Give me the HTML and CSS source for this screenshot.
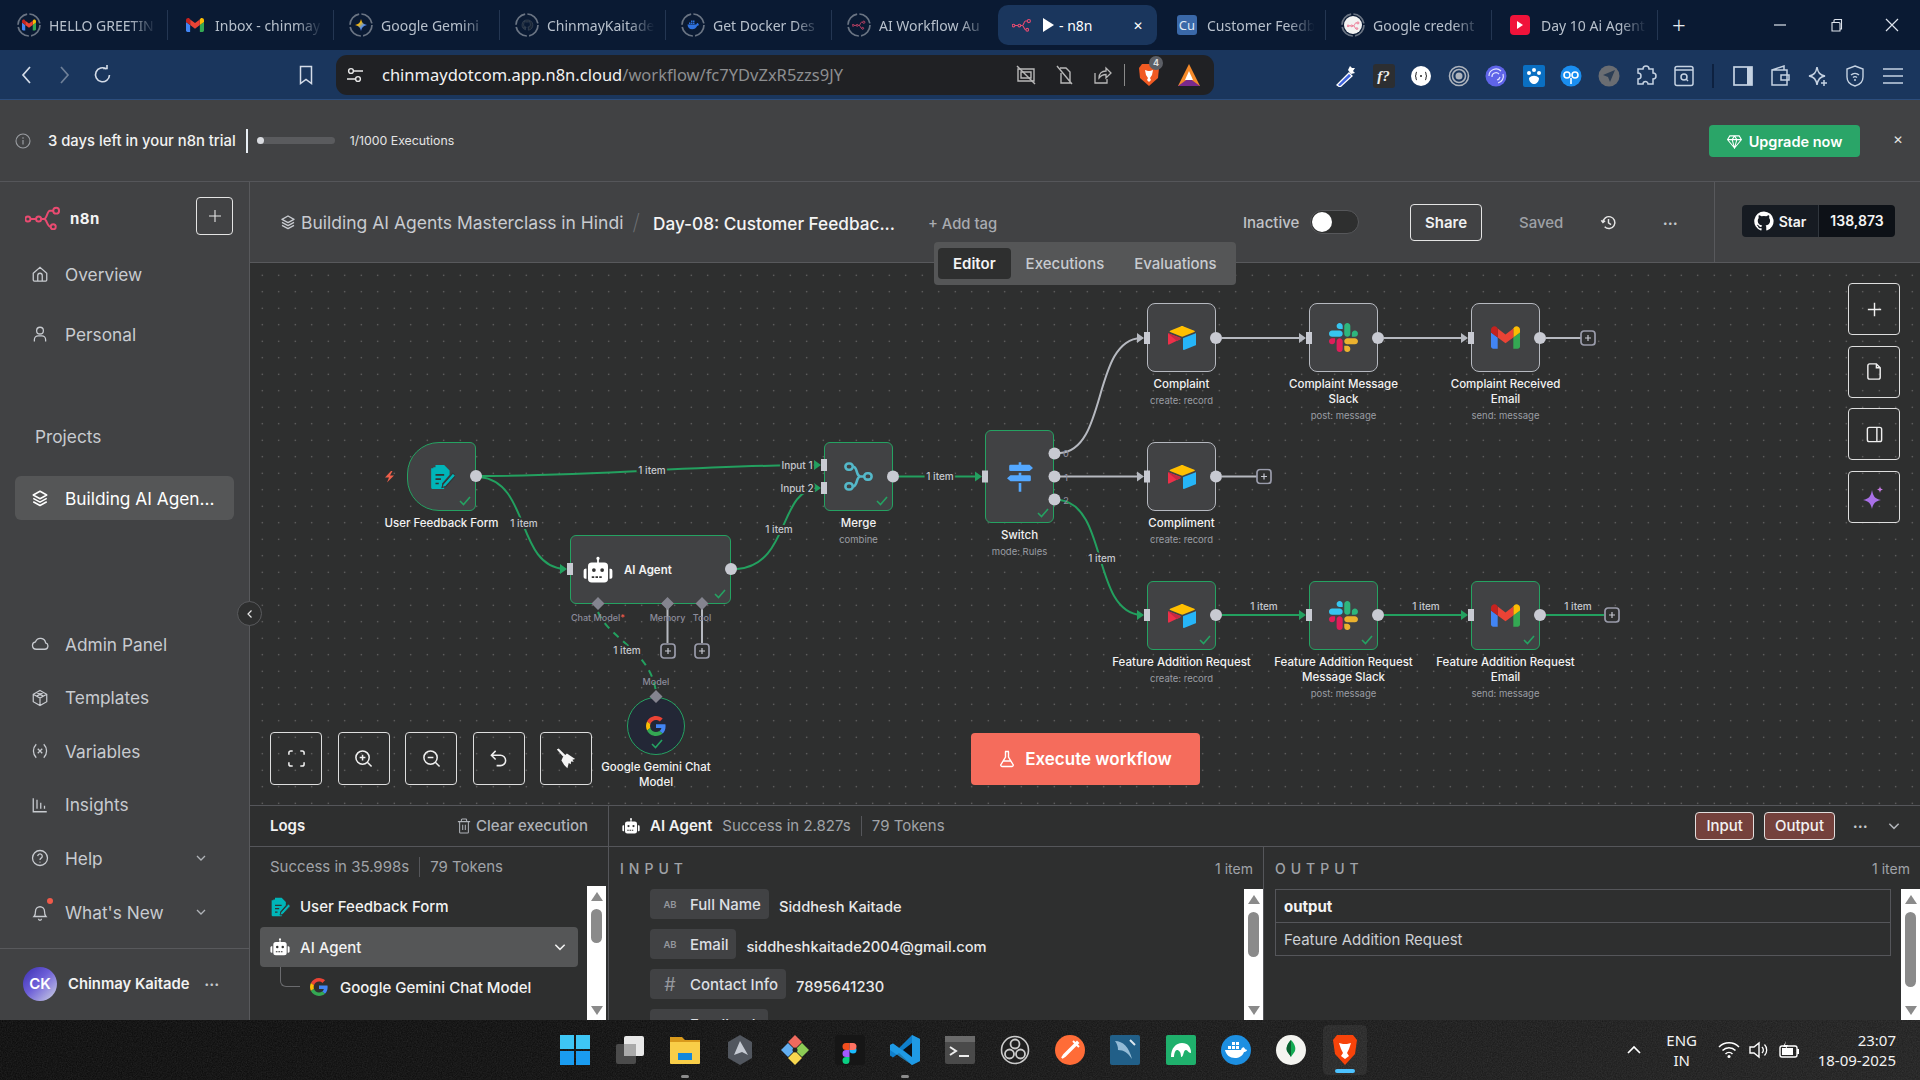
FILE: index.html
```html
<!DOCTYPE html>
<html lang="en">
<head>
<meta charset="utf-8">
<title>n8n</title>
<link rel="stylesheet" href="styles.css">
</head>
<body>
<svg class="defs" width="0" height="0" aria-hidden="true">
  <defs>
    <symbol id="i-n8n" viewBox="0 0 38 24"><g fill="none" stroke="#ea4b71" stroke-width="2"><circle cx="3" cy="13" r="2.600"/><circle cx="14" cy="13" r="2.600"/><circle cx="32" cy="4.500" r="3"/><circle cx="29" cy="21" r="2.600"/><path d="M5.600 13h5.800M16.600 13h3c3 0 3-8.500 6-8.500h3.400M19.600 13c3 0 3 8 6.800 8"/></g></symbol>
    <symbol id="i-robot" viewBox="0 0 24 24"><path fill="#fff" d="M12 1.500a1.300 1.300 0 0 1 .7 2.400V6h4.300a3 3 0 0 1 3 3v10a3 3 0 0 1-3 3H7a3 3 0 0 1-3-3V9a3 3 0 0 1 3-3h4.300V3.900A1.300 1.300 0 0 1 12 1.500zM1.800 11a1 1 0 0 1 1 0v8h-1a1.500 1.500 0 0 1-1.300-1.500v-5A1.500 1.500 0 0 1 1.800 11zM21.200 11h1a1.500 1.500 0 0 1 1.300 1.500v5a1.500 1.500 0 0 1-1.300 1.500h-1z"/><g fill="#333"><circle cx="8.700" cy="12" r="1.500"/><circle cx="15.300" cy="12" r="1.500"/><path d="M7 17h2v1.300H7zM10 17h2v1.300h-2zM13 17h2v1.300h-2z"/></g></symbol>
    <symbol id="i-form" viewBox="0 0 24 24"><path fill="#00b5b8" d="M6 1h8l5 5v4l-7 8v2l2 0v3H3a1 1 0 0 1-1-1V4h4z"/><path fill="#00b5b8" d="M4 3h3v2H4z"/><path d="M6 10h8M6 14h5M6 18h3" stroke="#333" stroke-width="1.500"/><path d="M13 18.500l9-10 2.500 2.200-9 10-3.500 1z" fill="#00b5b8" stroke="#333" stroke-width="1"/></symbol>
    <symbol id="i-air" viewBox="0 0 200 170"><path fill="#ffbf00" d="M90 2 15 33c-4 2-4 8 0 10l76 30c7 3 14 3 21 0l76-30c4-2 4-8 0-10L112 2c-7-3-15-3-22 0z"/><path fill="#26b5f8" d="M107 90v75c0 4 4 6 7 5l84-33c2-1 3-3 3-5V57c0-4-4-6-7-5l-84 33c-2 1-3 3-3 5z"/><path fill="#ed3049" d="M88 94 63 106l-3 1-52 25c-3 2-8-1-8-5V57c0-2 1-3 2-4l1-1c1-1 4-1 5 0l79 32c4 2 4 8 1 10z"/><path fill="#c62842" d="M88 94 63 106 1 52c1-1 3-1 4 0l79 32c4 2 4 8 4 10z"/></symbol>
    <symbol id="i-slack" viewBox="0 0 123 123"><path fill="#e01e5a" d="M25.800 77.600c0 7.100-5.800 12.900-12.900 12.900S0 84.700 0 77.600s5.800-12.900 12.900-12.900h12.900v12.900zM32.300 77.600c0-7.100 5.800-12.900 12.900-12.900s12.900 5.800 12.900 12.900v32.300c0 7.100-5.800 12.900-12.900 12.900s-12.900-5.800-12.900-12.900V77.600z"/><path fill="#36c5f0" d="M45.200 25.800c-7.100 0-12.900-5.800-12.900-12.900S38.100 0 45.200 0s12.900 5.800 12.900 12.900v12.900H45.200zM45.200 32.300c7.100 0 12.900 5.800 12.900 12.900s-5.800 12.900-12.900 12.900H12.900C5.800 58.100 0 52.300 0 45.200s5.800-12.900 12.900-12.900h32.300z"/><path fill="#2eb67d" d="M97 45.200c0-7.100 5.800-12.900 12.900-12.900s12.900 5.800 12.900 12.900-5.800 12.900-12.900 12.900H97V45.200zM90.500 45.200c0 7.100-5.800 12.900-12.900 12.900s-12.900-5.800-12.900-12.900V12.900C64.700 5.800 70.500 0 77.600 0s12.900 5.800 12.900 12.900v32.300z"/><path fill="#ecb22e" d="M77.600 97c7.100 0 12.900 5.800 12.900 12.900s-5.800 12.900-12.900 12.900-12.900-5.800-12.900-12.900V97h12.900zM77.600 90.500c-7.100 0-12.900-5.800-12.900-12.900s5.800-12.900 12.900-12.900h32.300c7.100 0 12.900 5.800 12.900 12.900s-5.800 12.900-12.900 12.900H77.600z"/></symbol>
    <symbol id="i-gmail" viewBox="0 0 52 40"><path fill="#4285f4" d="M4 40h8V20L0 11v25c0 2 2 4 4 4z"/><path fill="#34a853" d="M40 40h8c2 0 4-2 4-4V11L40 20z"/><path fill="#fbbc04" d="M40 4v16l12-9V6c0-5-6-8-10-5z"/><path fill="#ea4335" d="M12 20V4l14 10.500L40 4v16L26 30.500z"/><path fill="#c5221f" d="M0 6v5l12 9V4L10 1C6-2 0 1 0 6z"/></symbol>
    <symbol id="i-g" viewBox="0 0 48 48"><path fill="#ea4335" d="M24 9.500c3.540 0 6.710 1.220 9.210 3.600l6.850-6.850C35.900 2.380 30.470 0 24 0 14.620 0 6.510 5.380 2.560 13.220l7.980 6.190C12.430 13.720 17.740 9.500 24 9.500z"/><path fill="#4285f4" d="M46.980 24.550c0-1.570-.15-3.090-.38-4.550H24v9.020h12.940c-.58 2.960-2.260 5.480-4.780 7.180l7.730 6c4.510-4.180 7.090-10.360 7.090-17.650z"/><path fill="#fbbc05" d="M10.530 28.590c-.48-1.450-.76-2.990-.76-4.590s.27-3.140.76-4.590l-7.980-6.190C.92 16.460 0 20.120 0 24c0 3.880.92 7.540 2.560 10.780l7.970-6.190z"/><path fill="#34a853" d="M24 48c6.480 0 11.930-2.130 15.890-5.810l-7.730-6c-2.150 1.450-4.920 2.300-8.160 2.300-6.260 0-11.570-4.220-13.470-9.910l-7.980 6.190C6.510 42.620 14.620 48 24 48z"/></symbol>
    <symbol id="i-merge" viewBox="0 0 30 30"><g fill="none" stroke="#54b8c9" stroke-width="2.700"><rect x="1.500" y="1.500" width="7.500" height="6.500" rx="3"/><rect x="1.500" y="22" width="7.500" height="6.500" rx="3"/><rect x="21" y="11.700" width="7.500" height="6.500" rx="3"/><path d="M9 4.700c5.500 0 3 10.300 8 10.300h4M9 25.300c5.500 0 3-10.300 8-10.300"/></g></symbol>
    <symbol id="i-switch" viewBox="0 0 30 34"><path fill="#54a8ff" d="M13.500 0h3v3H26l4 3.500L26 10H4a1.500 1.500 0 0 1-1.500-1.500v-4A1.500 1.500 0 0 1 4 3h9.500zM13.500 12h3v3H26a1.500 1.500 0 0 1 1.500 1.500v4A1.500 1.500 0 0 1 26 22H4l-4-3.500L4 15h9.500zM13.500 24h3v10h-3z"/></symbol>
    <symbol id="i-check" viewBox="0 0 12 10"><path d="M1 5l3.500 3.500L11 1" fill="none" stroke="#25a262" stroke-width="1.600"/></symbol>
    <symbol id="i-plusbox" viewBox="0 0 16 16"><rect x="1" y="1" width="14" height="14" rx="3" fill="#2e2f2f" stroke="#9a9cab" stroke-width="1.700"/><path d="M5 8h6M8 5v6" stroke="#c5c7d0" stroke-width="1.200"/></symbol>
    <symbol id="i-layers" viewBox="0 0 24 24"><path fill="none" stroke="currentColor" stroke-width="2" stroke-linejoin="round" d="M12 3 3 8l9 5 9-5zM3 12.500l9 5 9-5M3 17l9 5 9-5"/></symbol>
    <symbol id="i-chev" viewBox="0 0 12 12"><path d="M2 4l4 4 4-4" fill="none" stroke="currentColor" stroke-width="1.300"/></symbol>
    <symbol id="i-ring" viewBox="0 0 24 24"><circle cx="12" cy="12" r="11" fill="none" stroke="#6a7483" stroke-width="1.700" stroke-dasharray="15 2.300"/></symbol>
  </defs>
</svg>

<div class="screen">
  <header class="tabbar">
    <div class="tab"><span class="ring"><svg><use href="#i-ring"/></svg><svg class="ring-in"><use href="#i-gmail"/></svg></span><span class="tab-title">HELLO GREETIN</span></div>
    <div class="tab plain"><svg class="tab-ico"><use href="#i-gmail"/></svg><span class="tab-title">Inbox - chinmay</span></div>
    <div class="tab"><span class="ring"><svg><use href="#i-ring"/></svg><svg class="ring-in" viewBox="0 0 24 24"><defs><linearGradient id="gem" x1="0" y1="0" x2="1" y2="1"><stop offset="0" stop-color="#ea4335"/><stop offset=".35" stop-color="#fbbc04"/><stop offset=".65" stop-color="#4f8df7"/><stop offset="1" stop-color="#9b6cf0"/></linearGradient></defs><path fill="url(#gem)" d="M12 0c1 7 5 11 12 12-7 1-11 5-12 12-1-7-5-11-12-12 7-1 11-5 12-12z"/></svg></span><span class="tab-title">Google Gemini</span></div>
    <div class="tab"><span class="ring"><svg><use href="#i-ring"/></svg><svg class="ring-in" viewBox="0 0 24 24"><path fill="#1a2636" stroke="#4d5868" d="M12 2a10 10 0 0 0-3 19.500v-3c-3 .6-3.500-1.500-4-2.500 3 1 3 2 4.300 2 .1-.8.500-1.500 1-2-3-.4-5-2-5-5 0-1.300.5-2.300 1.200-3-.2-.5-.3-1.700.2-3 1.400 0 2.300.8 2.800 1.200a9 9 0 0 1 5 0c.5-.4 1.400-1.200 2.800-1.200.5 1.300.4 2.500.2 3 .7.700 1.200 1.700 1.200 3 0 3-2 4.600-5 5 .6.500 1 1.400 1 2.500v4A10 10 0 0 0 12 2z"/></svg></span><span class="tab-title">ChinmayKaitade</span></div>
    <div class="tab"><span class="ring"><svg><use href="#i-ring"/></svg><svg class="ring-in" viewBox="0 0 24 24"><path fill="#2f72e0" d="M1 11h17.500c.5-2 2-3.500 3-3 1 .6 1.200 1.500 1.500 2.500.5 0 1 .5 1 1-1 2-3 2-3.500 2-2 5-6 7-10 7-6 0-9-4-9.500-9.500z"/><path fill="#2f72e0" d="M4 7h3v3H4zM8 7h3v3H8zM12 7h3v3h-3zM8 3h3v3H8zM12 3h3v3h-3z"/></svg></span><span class="tab-title">Get Docker Des</span></div>
    <div class="tab"><span class="ring"><svg><use href="#i-ring"/></svg><svg class="ring-in"><use href="#i-n8n"/></svg></span><span class="tab-title">AI Workflow Au</span></div>
    <div class="tab active"><svg class="tab-ico n8n-ico"><use href="#i-n8n"/></svg><span class="tab-play"></span><span class="tab-active-title">- n8n</span><span class="tab-x">✕</span></div>
    <div class="tab plain cu"><span class="cu-ico">Cu</span><span class="tab-title">Customer Feedb</span></div>
    <div class="tab"><span class="ring"><svg><use href="#i-ring"/></svg><span class="white-dot"><svg><use href="#i-n8n"/></svg></span></span><span class="tab-title">Google credent</span></div>
    <div class="tab plain"><span class="yt"><span class="yt-play"></span></span><span class="tab-title">Day 10 Ai Agent</span></div>
    <span class="new-tab">+</span>
    <div class="winctl">
      <svg viewBox="0 0 14 14"><path d="M1 7h12" stroke="#dde3ec" stroke-width="1.200"/></svg>
      <svg viewBox="0 0 14 14"><path d="M3 4.500h7a1 1 0 0 1 1 1V13H3zM5 4.500V2.500a1 1 0 0 1 1-1h6.500V11H11" fill="none" stroke="#dde3ec" stroke-width="1.100"/></svg>
      <svg viewBox="0 0 14 14"><path d="M1 1l12 12M13 1L1 13" stroke="#dde3ec" stroke-width="1.200"/></svg>
    </div>
  </header>

  <nav class="toolbar">
    <svg class="tb-ico back" viewBox="0 0 20 20"><path d="M13 2l-7 8 7 8" fill="none" stroke="#d4dce8" stroke-width="1.700"/></svg>
    <svg class="tb-ico fwd" viewBox="0 0 20 20"><path d="M7 2l7 8-7 8" fill="none" stroke="#6f8098" stroke-width="1.700"/></svg>
    <svg class="tb-ico reload" viewBox="0 0 20 20"><path d="M16.500 10a7 7 0 1 1-3-6M10 3.500h4V0" fill="none" stroke="#d4dce8" stroke-width="1.600"/></svg>
    <svg class="tb-ico bookmark" viewBox="0 0 20 20"><path d="M4.500 1.500h11v17l-5.500-4-5.500 4z" fill="none" stroke="#d4dce8" stroke-width="1.500"/></svg>
    <div class="address">
      <svg class="addr-tune" viewBox="0 0 18 18"><g fill="none" stroke="#e8e8e8" stroke-width="1.400"><circle cx="5" cy="5" r="2.400"/><path d="M8 5h9M1 13h8"/><circle cx="12" cy="13" r="2.400"/></g></svg>
      <span class="url"><span class="url-main">chinmaydotcom.app.n8n.cloud</span><span class="url-path">/workflow/fc7YDvZxR5zzs9JY</span></span>
      <div class="addr-right">
        <svg viewBox="0 0 20 20"><path d="M2 4h16v12H2zM5 7h10v6H5z" fill="none" stroke="#b8b8b8" stroke-width="1.400"/><path d="M1 1l18 18" stroke="#b8b8b8" stroke-width="1.400"/></svg>
        <svg viewBox="0 0 20 20"><path d="M6 3h6l4 4v11H7V8M3 1l15 18" fill="none" stroke="#b8b8b8" stroke-width="1.400"/></svg>
        <svg viewBox="0 0 20 20"><path d="M3 8v10h12v-4M7 13c0-5 3-7 7-7V3l5 5-5 5V9.500c-3 0-5 1-7 3.500z" fill="none" stroke="#b8b8b8" stroke-width="1.300"/></svg>
        <i class="addr-sep"></i>
        <span class="brave-wrap"><svg viewBox="0 0 20 24"><path fill="#f15a22" d="M3 1h14l3 4-1 10-9 8-9-8L0 5z"/><path fill="#fff" d="M6 7l3 1h2l3-1-1 5-2 3 1 2-2 2-2-2 1-2-2-3z"/></svg><b class="badge">4</b></span>
        <svg class="tri" viewBox="0 0 24 24"><path fill="#f58a2a" d="M12 1l11 22H1z"/><path fill="#7a2a8c" d="M12 15l11 8H1z"/><path fill="#fff" d="M12 8l4 9H8z"/></svg>
      </div>
    </div>
    <div class="exts">
      <svg viewBox="0 0 22 22"><path d="M2 20L14 8l3 3L5 22z" fill="#3e63dd" stroke="#fff" stroke-width="1.300"/><path d="M15 1l2 2 3 0-2 3 2 2-4 1-3-4z" fill="#fff"/></svg>
      <span class="ext-f">f?</span>
      <svg viewBox="0 0 22 22"><circle cx="11" cy="11" r="10" fill="#fff"/><path d="M7 7c-2 0 0 4-2 4 2 0 0 4 2 4M15 7c2 0 0 4 2 4-2 0 0 4-2 4" fill="none" stroke="#222"/><circle cx="11" cy="11" r="1" fill="#222"/></svg>
      <svg viewBox="0 0 22 22"><g fill="none" stroke="#aeb4bd" stroke-width="1.600"><circle cx="11" cy="11" r="9.500"/><circle cx="11" cy="11" r="6.500"/></g><circle cx="11" cy="11" r="3.500" fill="#aeb4bd"/></svg>
      <svg viewBox="0 0 22 22"><circle cx="11" cy="11" r="10.500" fill="#5f64e8"/><g fill="none" stroke="#dfe2ff" stroke-width="1.200"><path d="M4 11a7 7 0 0 1 12-5M7 12a4 4 0 0 1 7-3M18 9a7 7 0 0 1-5 9M15 12a4 4 0 0 1-3 3"/></g></svg>
      <svg viewBox="0 0 22 22"><rect width="22" height="22" rx="2" fill="#0a6fc2"/><g fill="#fff"><circle cx="6" cy="8" r="2"/><circle cx="11" cy="5" r="2"/><circle cx="16" cy="8" r="2"/><path d="M6 13c3-3 7-3 10 0 0 4-3 6-5 6s-5-2-5-6z"/></g></svg>
      <svg viewBox="0 0 22 22"><circle cx="11" cy="11" r="10.500" fill="#1a8ef0"/><g fill="none" stroke="#fff" stroke-width="1.600"><circle cx="7" cy="10" r="3"/><circle cx="15" cy="10" r="3"/><path d="M11 13v6"/></g></svg>
      <svg viewBox="0 0 22 22"><circle cx="11" cy="11" r="10.500" fill="#6a6d72"/><path fill="#2c3e55" d="M17 5L5 10l5 2 2 5z"/></svg>
      <svg viewBox="0 0 22 22"><path d="M8 4a3 3 0 0 1 6 0h4v4a3 3 0 0 1 0 6v5h-5a2.500 2.500 0 0 0-5 0H3v-5a3 3 0 0 0 0-6V4z" fill="none" stroke="#c5d2e2" stroke-width="1.500"/></svg>
      <svg viewBox="0 0 22 22"><rect x="2" y="1.500" width="18" height="19" rx="2" fill="none" stroke="#c5d2e2" stroke-width="1.500"/><path d="M2 5h18" stroke="#c5d2e2" stroke-width="1.500"/><circle cx="11" cy="12" r="3" fill="none" stroke="#c5d2e2" stroke-width="1.500"/><path d="M13 14l2 2" stroke="#c5d2e2" stroke-width="1.500"/></svg>
      <i class="ext-sep"></i>
      <svg viewBox="0 0 22 22"><rect x="2" y="2" width="18" height="18" fill="none" stroke="#c5d2e2" stroke-width="1.700"/><rect x="15" y="2" width="5" height="18" fill="#c5d2e2"/></svg>
      <svg viewBox="0 0 22 22"><path d="M3 5h15v15H3zM3 5l12-4v4M12 10h8v5h-8z" fill="none" stroke="#c5d2e2" stroke-width="1.500"/></svg>
      <svg viewBox="0 0 22 22"><path d="M10 2c1 6 3 8 8 9-5 1-7 3-8 9-1-6-3-8-8-9 5-1 7-3 8-9zM17 15v6M14 18h6" fill="none" stroke="#c5d2e2" stroke-width="1.500"/></svg>
      <svg viewBox="0 0 22 22"><path d="M11 1l8 3v8c0 5-4 8-8 9-4-1-8-4-8-9V4zM7 10a6 6 0 0 1 8 0M9 12.500a3 3 0 0 1 4 0" fill="none" stroke="#c5d2e2" stroke-width="1.400"/><circle cx="11" cy="15" r="1" fill="#c5d2e2"/></svg>
      <svg viewBox="0 0 22 22"><path d="M1 4h20M1 11h20M1 18h20" stroke="#c5d2e2" stroke-width="1.700"/></svg>
    </div>
  </nav>

  <section class="banner">
    <svg class="info" viewBox="0 0 16 16"><circle cx="8" cy="8" r="7" fill="none" stroke="#9a9da2" stroke-width="1.100"/><path d="M8 7v4.500M8 4.300v1.400" stroke="#9a9da2" stroke-width="1.200"/></svg>
    <span class="trial">3 days left in your n8n trial</span>
    <i class="trial-sep"></i>
    <div class="progress"><i class="progress-fill"></i></div>
    <span class="execs">1/1000 Executions</span>
    <button class="upgrade"><svg viewBox="0 0 16 16"><path d="M3 2h10l2.500 4L8 15 .5 6zM.5 6h15M5.500 6L8 15l2.500-9L8 2 5.500 6" fill="none" stroke="#fff" stroke-width="1.100"/></svg>Upgrade now</button>
    <span class="banner-x">✕</span>
  </section>

  <main class="app">
    <aside class="sidebar">
      <div class="brand">
        <svg class="brand-logo"><use href="#i-n8n"/></svg>
        <span class="brand-name">n8n</span>
        <button class="brand-add"><svg viewBox="0 0 14 14"><path d="M7 1v12M1 7h12" stroke="#e6e6e6" stroke-width="1.100"/></svg></button>
      </div>
      <a class="nav nav-first"><svg class="nav-ico" viewBox="0 0 24 24"><path d="M3 11l9-8 9 8v9a1.500 1.500 0 0 1-1.500 1.500h-15A1.500 1.500 0 0 1 3 20zM9 21.500V14a3 3 0 0 1 6 0v7.500" fill="none" stroke="currentColor" stroke-width="1.700"/></svg>Overview</a>
      <a class="nav nav-second"><svg class="nav-ico" viewBox="0 0 24 24"><circle cx="12" cy="7.500" r="4.500" fill="none" stroke="currentColor" stroke-width="1.700"/><path d="M4.500 22v-2.500a5 5 0 0 1 5-5h5a5 5 0 0 1 5 5V22" fill="none" stroke="currentColor" stroke-width="1.700"/></svg>Personal</a>
      <div class="projects-title">Projects</div>
      <a class="nav nav-active"><svg class="nav-ico"><use href="#i-layers"/></svg>Building AI Agen...</a>
      <div class="nav-bottom">
        <a class="nav"><svg class="nav-ico" viewBox="0 0 24 24"><path d="M7 19a5 5 0 0 1-1-9.900 7 7 0 0 1 13.500 1.500A4.300 4.300 0 0 1 18 19z" fill="none" stroke="currentColor" stroke-width="1.700"/></svg>Admin Panel</a>
        <a class="nav"><svg class="nav-ico" viewBox="0 0 24 24"><path d="M12 2l9 5v10l-9 5-9-5V7zM3 7l9 5 9-5M12 12v10M7.500 4.500L16.500 9.500M16.500 4.500L7.500 9.500" fill="none" stroke="currentColor" stroke-width="1.600"/></svg>Templates</a>
        <a class="nav"><svg class="nav-ico" viewBox="0 0 24 24"><path d="M7 3c-5 5-5 13 0 18M17 3c5 5 5 13 0 18M9 9l6 6M15 9l-6 6" fill="none" stroke="currentColor" stroke-width="1.700"/></svg>Variables</a>
        <a class="nav"><svg class="nav-ico" viewBox="0 0 24 24"><path d="M3 3v18h18M8 5v12M13 9v8M18 13v4" fill="none" stroke="currentColor" stroke-width="1.700"/></svg>Insights</a>
        <a class="nav nav-chev"><svg class="nav-ico" viewBox="0 0 24 24"><circle cx="12" cy="12" r="10" fill="none" stroke="currentColor" stroke-width="1.700"/><path d="M9 9.500a3 3 0 1 1 4.500 2.600c-1 .6-1.500 1.200-1.500 2.400M12 17v1" fill="none" stroke="currentColor" stroke-width="1.700"/></svg>Help<svg class="chev"><use href="#i-chev"/></svg></a>
        <a class="nav nav-chev"><span class="bell"><svg class="nav-ico" viewBox="0 0 24 24"><path d="M4 18c2-2 2-4 2-7a6 6 0 0 1 12 0c0 3 0 5 2 7zM10 21a2 2 0 0 0 4 0" fill="none" stroke="currentColor" stroke-width="1.700"/></svg><i class="bell-dot"></i></span>What's New<svg class="chev"><use href="#i-chev"/></svg></a>
      </div>
      <div class="user">
        <span class="avatar">CK</span>
        <span class="user-name">Chinmay Kaitade</span>
        <span class="dots">•••</span>
      </div>
    </aside>

    <section class="content">
      <div class="wf-head">
        <div class="crumb"><svg class="crumb-ico"><use href="#i-layers"/></svg><span>Building AI Agents Masterclass in Hindi</span></div>
        <span class="slash">/</span>
        <span class="wf-title">Day-08: Customer Feedbac...</span>
        <span class="add-tag">+ Add tag</span>
        <span class="inactive">Inactive</span>
        <span class="toggle"><i></i></span>
        <button class="share">Share</button>
        <span class="saved">Saved</span>
        <svg class="history" viewBox="0 0 20 20"><path d="M3.500 10a7 7 0 1 1 2 5M1.500 7.500l2 2.500 2.500-2M10 6v4.500l3 2" fill="none" stroke="#e6e6e6" stroke-width="1.700"/></svg>
        <span class="dots head-dots">•••</span>
        <div class="gh-wrap">
          <div class="gh"><span class="gh-star"><svg viewBox="0 0 24 24"><path fill="#fff" d="M12 .5a11.700 11.700 0 0 0-3.700 22.800c.6.100.8-.3.800-.6v-2c-3.300.7-4-1.600-4-1.600-.5-1.400-1.300-1.800-1.300-1.800-1-.7.100-.7.100-.7 1.200.1 1.800 1.200 1.800 1.200 1 1.800 2.800 1.300 3.400 1 .1-.8.400-1.300.8-1.600-2.600-.3-5.400-1.300-5.400-5.800 0-1.300.5-2.300 1.200-3.100-.1-.3-.5-1.500.1-3.100 0 0 1-.3 3.200 1.200a11 11 0 0 1 5.800 0c2.200-1.500 3.200-1.200 3.200-1.200.6 1.600.2 2.800.1 3.100.8.800 1.200 1.900 1.200 3.100 0 4.500-2.700 5.500-5.400 5.800.4.400.8 1.100.8 2.200v3.300c0 .3.200.7.800.6A11.700 11.700 0 0 0 12 .5z"/></svg>Star</span><span class="gh-count">138,873</span></div>
        </div>
      </div>

      <div class="canvas">
        <div class="seg">
          <span class="seg-item seg-on">Editor</span><span class="seg-item">Executions</span><span class="seg-item">Evaluations</span>
        </div>

        <svg class="edges" viewBox="250 263 1670 542">
          <g class="e-green">
            <path d="M476 476C600 476 700 465 818 465"/>
            <path d="M480 477C530 482 516 566 564 569"/>
            <path d="M737 569C790 565 778 490 818 488"/>
            <path d="M899 476.500H978"/>
            <path d="M1060 500C1108 506 1092 612 1141 615"/>
            <path d="M1222 615H1303M1384 615H1465M1546 615H1604"/>
            <path class="e-dash" d="M598 612C610 640 650 650 656 692"/>
          </g>
          <g class="e-gray">
            <path d="M1060 453C1108 450 1092 340 1141 338"/>
            <path d="M1060 476.500H1141"/>
            <path d="M1222 338H1303M1384 338H1465M1546 338H1581M1222 476.500H1257"/>
            <path class="e-thin" d="M667.500 603V643M702 603V643"/>
          </g>
          <g class="arrows-g">
            <path d="M814 460l7 5-7 5zM814 483l7 5-7 5zM560 564l7 5-7 5zM975 471.500l7 5-7 5zM1137 610l7 5-7 5zM1299 610l7 5-7 5zM1461 610l7 5-7 5z"/>
          </g>
          <g class="arrows-w">
            <path d="M1137 333l7 5-7 5zM1299 333l7 5-7 5zM1461 333l7 5-7 5zM1137 471.500l7 5-7 5z"/>
          </g>
          <g class="ports-in">
            <rect x="821" y="459" width="6" height="12"/><rect x="821" y="482" width="6" height="12"/><rect x="567" y="563" width="6" height="12"/><rect x="982" y="470.500" width="6" height="12"/>
            <rect x="1144" y="332" width="6" height="12"/><rect x="1306" y="332" width="6" height="12"/><rect x="1468" y="332" width="6" height="12"/>
            <rect x="1144" y="470.500" width="6" height="12"/>
            <rect x="1144" y="609" width="6" height="12"/><rect x="1306" y="609" width="6" height="12"/><rect x="1468" y="609" width="6" height="12"/>
          </g>
          <g class="ports-out">
            <circle cx="476" cy="476" r="6"/><circle cx="893" cy="476.500" r="6"/><circle cx="731" cy="569" r="6"/>
            <circle cx="1054.500" cy="453.500" r="6"/><circle cx="1054.500" cy="476.500" r="6"/><circle cx="1054.500" cy="499.500" r="6"/>
            <circle cx="1216" cy="338" r="6"/><circle cx="1378" cy="338" r="6"/><circle cx="1540" cy="338" r="6"/><circle cx="1216" cy="476.500" r="6"/>
            <circle cx="1216" cy="615" r="6"/><circle cx="1378" cy="615" r="6"/><circle cx="1540" cy="615" r="6"/>
          </g>
          <g class="diamonds">
            <path d="M598 597l6.500 6.500-6.500 6.500-6.500-6.500zM667.500 597l6.500 6.500-6.500 6.500-6.500-6.500zM702 597l6.500 6.500-6.500 6.500-6.500-6.500zM656 690l6.500 6.500-6.500 6.500-6.500-6.500z"/>
          </g>
          <use href="#i-plusbox" x="660" y="643" width="16" height="16"/>
          <use href="#i-plusbox" x="694" y="643" width="16" height="16"/>
          <use href="#i-plusbox" x="1580" y="330" width="16" height="16"/>
          <use href="#i-plusbox" x="1256" y="468.500" width="16" height="16"/>
          <use href="#i-plusbox" x="1604" y="607" width="16" height="16"/>
          <g class="elabels">
            <text x="652" y="473.500">1 item</text>
            <text x="524" y="526.500">1 item</text>
            <text x="779" y="532.500">1 item</text>
            <text x="627" y="653.500">1 item</text>
            <text x="940" y="480">1 item</text>
            <text x="1102" y="561.500">1 item</text>
            <text x="1264" y="609.500">1 item</text>
            <text x="1426" y="609.500">1 item</text>
            <text x="1578" y="609.500">1 item</text>
            <text x="797" y="468.500">Input 1</text>
            <text x="797" y="491.500">Input 2</text>
          </g>
          <g class="plabels">
            <text x="598" y="620.500">Chat Model<tspan class="req">*</tspan></text>
            <text x="667.500" y="620.500">Memory</text>
            <text x="702" y="620.500">Tool</text>
            <text x="656" y="684.500">Model</text>
            <text x="1066" y="457">0</text>
            <text x="1066" y="480.500">1</text>
            <text x="1066" y="504">2</text>
          </g>
          <path class="bolt" d="M391 471l-6 6.500h4l-2 5 7-7h-4l2.500-4.500z"/>
        </svg>

        <div class="node n-form ok trigger"><svg class="node-ico ico-form"><use href="#i-form"/></svg><svg class="check"><use href="#i-check"/></svg><div class="node-label"><div class="nt">User Feedback Form</div></div></div>
        <div class="node n-merge ok"><svg class="node-ico ico-merge"><use href="#i-merge"/></svg><svg class="check"><use href="#i-check"/></svg><div class="node-label"><div class="nt">Merge</div><div class="ns">combine</div></div></div>
        <div class="node n-agent ok"><svg class="ico-robot"><use href="#i-robot"/></svg><span class="agent-name">AI Agent</span><svg class="check"><use href="#i-check"/></svg></div>
        <div class="node n-gemini ok"><svg class="ico-g"><use href="#i-g"/></svg><svg class="check check-mid"><use href="#i-check"/></svg><div class="node-label"><div class="nt">Google Gemini Chat<br>Model</div></div></div>
        <div class="node n-switch ok"><svg class="node-ico ico-switch"><use href="#i-switch"/></svg><svg class="check"><use href="#i-check"/></svg><div class="node-label"><div class="nt">Switch</div><div class="ns">mode: Rules</div></div></div>
        <div class="node n-c1 idle"><svg class="node-ico ico-air"><use href="#i-air"/></svg><div class="node-label"><div class="nt">Complaint</div><div class="ns">create: record</div></div></div>
        <div class="node n-c2 idle"><svg class="node-ico ico-slack"><use href="#i-slack"/></svg><div class="node-label"><div class="nt">Complaint Message<br>Slack</div><div class="ns">post: message</div></div></div>
        <div class="node n-c3 idle"><svg class="node-ico ico-gmail"><use href="#i-gmail"/></svg><div class="node-label"><div class="nt">Complaint Received<br>Email</div><div class="ns">send: message</div></div></div>
        <div class="node n-m1 idle"><svg class="node-ico ico-air"><use href="#i-air"/></svg><div class="node-label"><div class="nt">Compliment</div><div class="ns">create: record</div></div></div>
        <div class="node n-f1 ok"><svg class="node-ico ico-air"><use href="#i-air"/></svg><svg class="check"><use href="#i-check"/></svg><div class="node-label"><div class="nt">Feature Addition Request</div><div class="ns">create: record</div></div></div>
        <div class="node n-f2 ok"><svg class="node-ico ico-slack"><use href="#i-slack"/></svg><svg class="check"><use href="#i-check"/></svg><div class="node-label"><div class="nt">Feature Addition Request<br>Message Slack</div><div class="ns">post: message</div></div></div>
        <div class="node n-f3 ok"><svg class="node-ico ico-gmail"><use href="#i-gmail"/></svg><svg class="check"><use href="#i-check"/></svg><div class="node-label"><div class="nt">Feature Addition Request<br>Email</div><div class="ns">send: message</div></div></div>

        <div class="side-tools">
          <button class="ctl"><svg viewBox="0 0 20 20"><path d="M10 3v14M3 10h14" stroke="#f0f0f0" stroke-width="1.500"/></svg></button>
          <button class="ctl"><svg viewBox="0 0 20 20"><path d="M5 2h7l4 4v10a2 2 0 0 1-2 2H5a2 2 0 0 1-2-2V4a2 2 0 0 1 2-2zM12 2v4h4" fill="none" stroke="#f0f0f0" stroke-width="1.500"/></svg></button>
          <button class="ctl"><svg viewBox="0 0 20 20"><rect x="2.500" y="2.500" width="15" height="15" rx="2" fill="none" stroke="#f0f0f0" stroke-width="1.500"/><path d="M12.500 2.500v15" stroke="#f0f0f0" stroke-width="1.500"/></svg></button>
          <button class="ctl ctl-spark"><svg viewBox="0 0 24 24"><path fill="#a970e8" d="M10 5c1 6 3 9 9 10-6 1-8 4-9 9-1-5-3-8-9-9 6-1 8-4 9-10z"/><path fill="#c47ae0" d="M18 1c.4 2.500 1 3 3 3.500-2 .5-2.600 1-3 3.500-.4-2.500-1-3-3-3.500 2-.5 2.600-1 3-3.500z"/></svg></button>
        </div>

        <div class="bottom-tools">
          <button class="ctl"><svg viewBox="0 0 20 20"><path d="M2 6V4a2 2 0 0 1 2-2h2M14 2h2a2 2 0 0 1 2 2v2M18 14v2a2 2 0 0 1-2 2h-2M6 18H4a2 2 0 0 1-2-2v-2" fill="none" stroke="#f0f0f0" stroke-width="1.600"/></svg></button>
          <button class="ctl"><svg viewBox="0 0 20 20"><circle cx="9" cy="9" r="7" fill="none" stroke="#f0f0f0" stroke-width="1.600"/><path d="M14 14l4.500 4.500M6 9h6M9 6v6" stroke="#f0f0f0" stroke-width="1.600"/></svg></button>
          <button class="ctl"><svg viewBox="0 0 20 20"><circle cx="9" cy="9" r="7" fill="none" stroke="#f0f0f0" stroke-width="1.600"/><path d="M14 14l4.500 4.500M6 9h6" stroke="#f0f0f0" stroke-width="1.600"/></svg></button>
          <button class="ctl"><svg viewBox="0 0 20 20"><path d="M7 2L2.500 6.500 7 11M3 6.500h9a5 5 0 0 1 0 11H8" fill="none" stroke="#f0f0f0" stroke-width="1.600"/></svg></button>
          <button class="ctl ctl-broom"><svg viewBox="0 0 24 24"><path fill="#f4f4f4" d="M2 1.500 4 .5l7.500 7.500-2 2zM8.500 10 13 6l9 6-3 .7 1.500 2.300-3-.2-.3 3-2.200-1.500-1.500 5.700-3.500-3.500-3-5z"/></svg></button>
        </div>

        <button class="execute"><svg viewBox="0 0 16 18"><path d="M6 1.500h4M6.500 1.500V7L2 14.500A1.300 1.300 0 0 0 3 16.500h10a1.300 1.300 0 0 0 1-2L9.500 7V1.500M4.500 11h7" fill="none" stroke="#fff" stroke-width="1.400"/></svg>Execute workflow</button>
      </div>

      <div class="logs">
        <div class="logs-left">
          <div class="logs-head"><span class="logs-title">Logs</span><span class="clear"><svg viewBox="0 0 16 18"><path d="M1 4h14M5 4V2a1 1 0 0 1 1-1h4a1 1 0 0 1 1 1v2M3 4v12a1 1 0 0 0 1 1h8a1 1 0 0 0 1-1V4M6.500 7.500v6M9.500 7.500v6" fill="none" stroke="#aeb2b8" stroke-width="1.200"/></svg>Clear execution</span></div>
          <div class="logs-sum"><span>Success in 35.998s</span><i class="vsep"></i><span>79 Tokens</span></div>
          <div class="logs-body">
            <div class="tree">
              <div class="tree-row tree-first"><svg class="tree-ico"><use href="#i-form"/></svg>User Feedback Form</div>
              <div class="tree-row tree-on"><svg class="tree-ico"><use href="#i-robot"/></svg>AI Agent<svg class="tree-chev"><use href="#i-chev"/></svg></div>
              <div class="tree-row tree-sub"><i class="branch"></i><svg class="tree-g"><use href="#i-g"/></svg>Google Gemini Chat Model</div>
            </div>
            <div class="scroll scroll-a"><i class="s-up"></i><i class="s-thumb"></i><i class="s-down"></i></div>
          </div>
        </div>
        <div class="logs-right">
          <div class="logs-head detail-head">
            <svg class="dh-ico"><use href="#i-robot"/></svg>
            <span class="dh-name">AI Agent</span>
            <span class="dh-stat">Success in 2.827s</span><i class="vsep"></i><span class="dh-stat">79 Tokens</span>
            <span class="io-btn io-first">Input</span><span class="io-btn">Output</span>
            <span class="dots io-dots">•••</span>
            <svg class="io-chev"><use href="#i-chev"/></svg>
          </div>
          <div class="io">
            <div class="io-in">
              <div class="io-bar"><span class="io-label">INPUT</span><span class="io-count">1 item</span></div>
              <div class="io-body">
                <div class="fields">
                  <div class="field"><span class="pill"><span class="pill-t">AB</span>Full Name</span><span class="val">Siddhesh Kaitade</span></div>
                  <div class="field"><span class="pill"><span class="pill-t">AB</span>Email</span><span class="val">siddheshkaitade2004@gmail.com</span></div>
                  <div class="field"><span class="pill"><span class="pill-t pill-h">#</span>Contact Info</span><span class="val">7895641230</span></div>
                  <div class="field"><span class="pill"><span class="pill-t">AB</span>Feedback</span></div>
                </div>
                <div class="scroll scroll-b"><i class="s-up"></i><i class="s-thumb"></i><i class="s-down"></i></div>
              </div>
            </div>
            <div class="io-out">
              <div class="io-bar"><span class="io-label">OUTPUT</span><span class="io-count">1 item</span></div>
              <div class="io-body">
                <table class="out-table"><tr><th>output</th></tr><tr><td>Feature Addition Request</td></tr></table>
                <div class="scroll scroll-c"><i class="s-up"></i><i class="s-thumb"></i><i class="s-down"></i></div>
              </div>
            </div>
          </div>
        </div>
      </div>
      <button class="collapse"><svg viewBox="0 0 10 10"><path d="M6.500 1.500L3 5l3.500 3.500" fill="none" stroke="#e6e6e6" stroke-width="1.200"/></svg></button>
    </section>
  </main>

  <footer class="taskbar">
    <svg class="noise" width="100%" height="100%"><filter id="nz"><feTurbulence type="fractalNoise" baseFrequency=".8" numOctaves="2"/><feColorMatrix values="0 0 0 0 1 0 0 0 0 1 0 0 0 0 1 0 0 0 .12 0"/></filter><rect width="100%" height="100%" filter="url(#nz)"/></svg>
    <div class="tb-apps">
      <span class="app-i"><svg viewBox="0 0 30 30"><g fill="#3ec6f5"><path d="M0 0h14v14H0z"/><path d="M16 0h14v14H16z"/></g><g fill="#1a9cf0"><path d="M0 16h14v14H0z"/><path d="M16 16h14v14H16z"/></g></svg></span>
      <span class="app-i"><svg viewBox="0 0 30 30"><rect x="1" y="9" width="20" height="20" rx="2" fill="#4b4b4b"/><rect x="9" y="1" width="20" height="20" rx="2" fill="#e8e8e8"/><rect x="9" y="9" width="12" height="12" fill="#aaa"/></svg></span>
      <span class="app-i running"><svg viewBox="0 0 30 30"><path fill="#d99a1c" d="M0 2h12l3 3h15v3H0z"/><path fill="#f9ce48" d="M0 7h30v21a1 1 0 0 1-1 1H1a1 1 0 0 1-1-1z"/><path fill="#1488dc" d="M8 18h14v7H8z"/></svg></span>
      <span class="app-i"><svg viewBox="0 0 30 30"><path fill="#51565e" d="M15 0l12 7v16l-12 7-12-7V7z"/><path fill="#c5cad2" d="M15 6l8 14-6-3-8 3z"/></svg></span>
      <span class="app-i"><svg viewBox="0 0 30 30"><path fill="#ef6a5e" d="M15 0l7 7-7 7-7-7z"/><path fill="#62aef0" d="M8 8l7 7-7 7-7-7z"/><path fill="#8dcc55" d="M22 8l7 7-7 7-7-7z"/><path fill="#f7d74f" d="M15 16l7 7-7 7-7-7z"/><circle cx="15" cy="15" r="2.500" fill="#222"/></svg></span>
      <span class="app-i"><svg viewBox="0 0 30 30"><rect width="30" height="30" rx="3" fill="#161616"/><circle cx="18" cy="15" r="3.500" fill="#1abcfe"/><path fill="#0acf83" d="M11 22h3.500v3.500A3.500 3.500 0 1 1 11 22z"/><path fill="#a259ff" d="M11 15h3.500v7H11a3.500 3.500 0 1 1 0-7z"/><path fill="#f24e1e" d="M11 8h3.500v7H11a3.500 3.500 0 1 1 0-7z"/><path fill="#ff7262" d="M14.500 8H18a3.500 3.500 0 1 1 0 7h-3.500z"/></svg></span>
      <span class="app-i running"><svg viewBox="0 0 30 30"><path fill="#0f7fcc" d="M22 0l8 4v22l-8 4-13-12-6 4.500-3-2V10l3-1.500 6 4.500z"/><path fill="#27a5ef" d="M22 0l8 4v22l-8 4zM0 10l3-1.500L22 22v8L0 15z" opacity=".7"/><path fill="#0d1117" d="M22 8v14l-9-7z"/></svg></span>
      <span class="app-i"><svg viewBox="0 0 30 30"><rect y="1" width="30" height="28" rx="2" fill="#4a4a4a"/><rect y="1" width="30" height="6" fill="#6a6a6a"/><path d="M5 12l6 4-6 4M14 21h10" fill="none" stroke="#eee" stroke-width="2"/></svg></span>
      <span class="app-i"><svg viewBox="0 0 30 30"><circle cx="15" cy="15" r="13.500" fill="#202020" stroke="#ccc" stroke-width="1.600"/><g fill="none" stroke="#ccc" stroke-width="1.800"><circle cx="15" cy="9" r="4.500"/><circle cx="9.500" cy="19" r="4.500"/><circle cx="20.500" cy="19" r="4.500"/></g></svg></span>
      <span class="app-i"><svg viewBox="0 0 30 30"><circle cx="15" cy="15" r="15" fill="#ff6c37"/><path d="M22 7L9 20l-2 3 3-2 13-13zM18 6l6 6" stroke="#fff" stroke-width="2" fill="none"/></svg></span>
      <span class="app-i"><svg viewBox="0 0 30 30"><rect width="30" height="30" rx="2" fill="#215f88"/><path d="M5 6c8 0 14 6 17 18-4-6-8-9-14-9 0-4-1-6-3-9z" fill="#93bbd6"/><path d="M20 5l5 5" stroke="#dce7ef" stroke-width="2"/></svg></span>
      <span class="app-i"><svg viewBox="0 0 30 30"><rect width="30" height="30" rx="2" fill="#1fb06c"/><path fill="#fff" d="M5 22c0-9 5-14 11-14s9 4 9 10c-3 0-3-3-5-3-3 0-2 7-5 7 0-5-2-7-4-7s-3 4-3 7z"/></svg></span>
      <span class="app-i"><svg viewBox="0 0 30 30"><circle cx="15" cy="15" r="15" fill="#1d8fe1"/><path fill="#fff" d="M4 15h16c.5-2 2-3 3-2.500l1.500 2c1 0 1.500.5 1.500 1-1 1.500-2.500 1.500-3 1.500-1.500 4-5 6-9 6-5 0-9-3-10-8zM7 11h3v3H7zM11 11h3v3h-3zM15 11h3v3h-3zM11 7h3v3h-3zM15 7h3v3h-3z"/></svg></span>
      <span class="app-i"><svg viewBox="0 0 30 30"><circle cx="15" cy="15" r="15" fill="#f4f4f0"/><path fill="#13aa52" d="M15 5c4 4 5 8 4 11-1 2-3 4-4 6-1-2-3-4-4-6-1-3 0-7 4-11z"/><path fill="#0b5f30" d="M15 5v17c-1-2-3-4-4-6-1-3 0-7 4-11z"/></svg></span>
      <span class="app-i app-brave running-blue"><svg viewBox="0 0 26 30"><path fill="#f7430a" d="M5 0h16l4 5-2 14-10 11L3 19 1 5z"/><path fill="#fff" d="M7 8l4 1h4l4-1-2 6-2 4 2 3-4 3-4-3 2-3-2-4z"/></svg></span>
    </div>
    <div class="tray">
      <svg class="tray-up" viewBox="0 0 14 10"><path d="M1 8l6-6 6 6" fill="none" stroke="#fff" stroke-width="1.700"/></svg>
      <div class="lang"><span>ENG</span><span>IN</span></div>
      <svg class="tray-i" viewBox="0 0 22 18"><path d="M1 6a14 14 0 0 1 20 0M4.500 9.500a9 9 0 0 1 13 0M7.500 13a5 5 0 0 1 7 0" fill="none" stroke="#fff" stroke-width="1.500"/><circle cx="11" cy="15.500" r="1.500" fill="#fff"/></svg>
      <svg class="tray-i" viewBox="0 0 22 18"><path d="M2 6h4l5-4v14l-5-4H2z" fill="none" stroke="#fff" stroke-width="1.400"/><path d="M14 6a4 4 0 0 1 0 6M16.500 3.500a8 8 0 0 1 0 11" fill="none" stroke="#fff" stroke-width="1.300"/></svg>
      <svg class="tray-i" viewBox="0 0 22 18"><rect x="2" y="5" width="17" height="11" rx="2" fill="none" stroke="#fff" stroke-width="1.400"/><rect x="4" y="7" width="11" height="7" fill="#fff"/><path d="M19 8h2v5h-2z" fill="#fff"/><path d="M8 0L5 6h3l-1 4 3-6H7z" fill="#fff"/></svg>
      <div class="clock"><span>23:07</span><span>18-09-2025</span></div>
    </div>
  </footer>
</div>
</body>
</html>
```

FILE: styles.css
```css
* { box-sizing: border-box; }
html, body { margin: 0; height: 100%; overflow: hidden; background: #2e2f2f; }
body { font-family: Inter, "Noto Sans", sans-serif; color: #c5c9ce; }
button { font: inherit; background: none; border: 0; padding: 0; color: inherit; }
i { display: block; font-style: normal; }
svg { display: block; }
.defs { position: absolute; }
.screen { width: 1920px; height: 1080px; display: flex; flex-direction: column; }

/* tabs */
.tabbar { height: 50px; flex: none; background: #0a1a33; display: flex; align-items: center; padding-left: 2px; font-family: "Noto Sans", sans-serif; font-size: 14px; color: #b7c0cc; position: relative; }
.tab { width: 166px; height: 30px; flex: none; display: flex; align-items: center; padding-left: 15px; gap: 8px; border-right: 1px solid #243652; overflow: hidden; }
.tab.plain { padding-left: 18px; gap: 11px; }
.tab.active, .tab:nth-child(6) { border-right: 0; }
.tab-title { flex: 1; white-space: nowrap; margin-right: 6px; -webkit-mask-image: linear-gradient(to right, #000 72%, transparent 96%); mask-image: linear-gradient(to right, #000 72%, transparent 96%); }
.ring { position: relative; width: 24px; height: 24px; flex: none; display: block; }
.ring > svg:first-child { width: 24px; height: 24px; }
.ring-in { position: absolute; left: 5px; top: 6px; width: 14px; height: 12px; }
.tab-ico { width: 18px; height: 16px; flex: none; }
.tab.active { width: 159px; height: 40px; background: #1a365d; border-radius: 10px; color: #fff; padding-left: 14px; gap: 0; }
.n8n-ico { width: 20px; height: 14px; }
.tab-play { width: 0; height: 0; border-left: 11px solid #fff; border-top: 7px solid transparent; border-bottom: 7px solid transparent; margin-left: 11px; }
.tab-active-title { margin-left: 5px; }
.tab-x { margin-left: auto; margin-right: 14px; font-size: 12px; }
.tab.cu { width: 169px; padding-left: 20px; gap: 10px; }
.cu-ico { width: 20px; height: 20px; background: #3a68a8; color: #dfe8f5; font-size: 13px; line-height: 20px; text-align: center; border-radius: 3px; flex: none; }
.white-dot { position: absolute; inset: 3px; background: #f2f2f2; border-radius: 50%; display: flex; align-items: center; justify-content: center; }
.white-dot svg { width: 13px; height: 9px; }
.yt { width: 20px; height: 20px; background: #f0133a; border-radius: 4px; flex: none; display: flex; align-items: center; justify-content: center; }
.yt-play { width: 0; height: 0; border-left: 6px solid #fff; border-top: 4px solid transparent; border-bottom: 4px solid transparent; }
.new-tab { color: #e6ebf2; font-size: 24px; font-weight: 300; margin-left: 14px; line-height: 1; }
.winctl { position: absolute; right: 21px; top: 18px; display: flex; gap: 42px; }
.winctl svg { width: 14px; height: 14px; }

/* toolbar */
.toolbar { height: 50px; flex: none; background: #1a365d; border-bottom: 1px solid #2c4d7c; display: flex; align-items: center; position: relative; }
.tb-ico { width: 20px; height: 22px; flex: none; }
.back { margin-left: 17px; }
.fwd { margin-left: 17px; }
.reload { margin-left: 19px; }
.bookmark { margin-left: 183px; }
.address { margin-left: 20px; width: 878px; height: 40px; background: #202124; border-radius: 11px; display: flex; align-items: center; padding-left: 10px; font-family: "Noto Sans", sans-serif; font-size: 16.500px; }
.addr-tune { width: 18px; height: 18px; flex: none; }
.url { margin-left: 18px; white-space: nowrap; }
.url-main { color: #f2f2f2; }
.url-path { color: #8d8e90; }
.addr-right { margin-left: auto; display: flex; align-items: center; padding-right: 13px; gap: 18px; }
.addr-right > svg { width: 20px; height: 20px; }
.addr-sep { width: 1px; height: 22px; background: #8a8a8a; margin: 0 -4px 0 -6px; }
.brave-wrap { position: relative; width: 20px; height: 24px; }
.brave-wrap svg { width: 20px; height: 24px; }
.badge { position: absolute; left: 10px; top: -7px; width: 14px; height: 14px; border-radius: 50%; background: #5c5f66; color: #ddd; font: 700 9px/14px Inter, sans-serif; text-align: center; }
.addr-right > .tri { width: 24px; height: 24px; }
.exts { position: absolute; left: 1335px; top: 14px; display: flex; align-items: center; gap: 15.500px; }
.exts svg { width: 22px; height: 22px; flex: none; }
.ext-f { width: 22px; height: 24px; background: #2c2e31; border-radius: 3px; color: #eee; font: italic 700 15px/24px "Liberation Serif", serif; text-align: center; }
.ext-sep { width: 2px; height: 24px; background: #0d2140; margin: 0 2px; }

/* banner */
.banner { height: 82px; flex: none; background: #414244; border-bottom: 1px solid #55565a; display: flex; align-items: center; padding-left: 15px; position: relative; }
.info { width: 16px; height: 16px; }
.trial { margin-left: 17px; color: #f2f2f2; font-size: 14.800px; font-weight: 500; white-space: nowrap; }
.trial-sep { width: 2px; height: 24px; background: #e8eef4; margin-left: 10px; }
.progress { width: 78px; height: 7px; background: #5a5b5e; border-radius: 4px; margin-left: 9px; }
.progress-fill { width: 7px; height: 7px; border-radius: 50%; background: #d9dbe0; }
.execs { font-size: 12.300px; margin-left: 15px; color: #e4e4e4; }
.upgrade { position: absolute; left: 1709px; top: 25px; width: 151px; height: 32px; background: #2aa568; border-radius: 4px; color: #fff; font-size: 14.500px; font-weight: 600; display: flex; align-items: center; justify-content: center; gap: 7px; }
.upgrade svg { width: 15px; height: 15px; }
.banner-x { position: absolute; left: 1893px; top: 32px; font-size: 12px; color: #e6e6e6; }

/* app */
.app { flex: 1; display: flex; min-height: 0; }
.sidebar { width: 250px; flex: none; background: #414244; border-right: 1px solid #58595c; display: flex; flex-direction: column; }
.brand { display: flex; align-items: center; padding: 15px 16px 0 25px; }
.brand-logo { width: 37px; height: 24px; margin-top: 4px; }
.brand-name { margin: 4px 0 0 8px; font-weight: 700; font-size: 15px; color: #f4f4f4; letter-spacing: .4px; }
.brand-add { margin-left: auto; width: 37px; height: 38px; border: 1px solid #e4e4e4; border-radius: 4px; display: flex; align-items: center; justify-content: center; }
.brand-add svg { width: 14px; height: 14px; }
.nav { height: 44px; display: flex; align-items: center; padding-left: 31px; font-size: 17.300px; color: #c8cbd0; position: relative; }
.nav-ico { width: 18px; height: 18px; flex: none; margin-right: 16px; }
.nav-first { margin-top: 17px; }
.nav-second { margin-top: 16px; }
.projects-title { margin: 71px 0 0 35px; font-size: 17.300px; line-height: 20px; color: #c8cbd0; }
.nav-active { margin: 29px 15px 0; padding-left: 16px; background: #555657; border-radius: 6px; color: #fff; }
.nav-bottom { margin-top: auto; margin-bottom: 14px; display: flex; flex-direction: column; gap: 9.600px; }
.chev { width: 12px; height: 12px; margin-left: auto; margin-right: 42px; color: #b0b3b8; }
.bell { position: relative; display: block; }
.bell-dot { position: absolute; left: 16px; top: -5px; width: 6px; height: 6px; border-radius: 50%; background: #f05a4a; }
.user { height: 72px; flex: none; border-top: 1px solid #58595c; display: flex; align-items: center; padding: 0 0 2px 23px; }
.avatar { width: 34px; height: 34px; border-radius: 50%; background: linear-gradient(135deg, #3b2fb0, #6d5fd8 45%, #d0d4e4); color: #fff; font-size: 15px; font-weight: 600; display: flex; align-items: center; justify-content: center; }
.user-name { margin-left: 11px; font-size: 14.800px; font-weight: 600; color: #f2f2f2; white-space: nowrap; }
.dots { color: #c4c6ca; font-size: 8px; letter-spacing: .5px; }
.user .dots { margin-left: 15px; }

.content { flex: 1; min-width: 0; display: flex; flex-direction: column; position: relative; }
.wf-head { height: 81px; flex: none; background: #414244; border-bottom: 1px solid #58595c; display: flex; align-items: center; padding-left: 30px; }
.crumb { display: flex; align-items: center; gap: 5px; font-size: 17.500px; color: #c8cbd0; white-space: nowrap; }
.crumb-ico { width: 16px; height: 16px; }
.slash { margin-left: 9px; font-size: 22px; font-weight: 200; color: #707276; }
.wf-title { position: absolute; left: 403px; top: 31px; font-size: 17.200px; font-weight: 500; color: #f4f4f4; white-space: nowrap; }
.add-tag { position: absolute; left: 678px; top: 33px; font-size: 14.800px; font-weight: 500; color: #a9acb1; }
.inactive { position: absolute; left: 993px; top: 31px; font-size: 15px; font-weight: 500; color: #c0c3c7; }
.toggle { position: absolute; left: 1060px; top: 28px; width: 49px; height: 24px; background: #2e2f2f; border: 1px solid #56575a; border-radius: 12px; }
.toggle i { width: 20px; height: 20px; border-radius: 50%; background: #fff; margin: 1px; }
.share { position: absolute; left: 1160px; top: 22px; width: 72px; height: 37px; border: 1px solid #e4e4e4; border-radius: 4px; font-size: 15px; font-weight: 600; color: #f0f0f0; background: #414244; }
.saved { position: absolute; left: 1269px; top: 31px; font-size: 15px; font-weight: 500; color: #9ea1a6; }
.history { position: absolute; left: 1350px; top: 32px; width: 17px; height: 17px; }
.head-dots { position: absolute; left: 1413px; top: 36px; }
.gh-wrap { position: absolute; left: 1464px; top: 0; height: 80px; width: 206px; border-left: 1px solid #58595c; padding: 23px 0 0 27px; }
.gh { display: flex; width: 153px; height: 32px; border-radius: 4px; overflow: hidden; font-size: 14px; font-weight: 600; color: #f4f4f4; }
.gh-star { width: 76px; background: #161b22; display: flex; align-items: center; justify-content: center; gap: 5px; }
.gh-star svg { width: 20px; height: 20px; }
.gh-count { flex: 1; background: #0d1117; border-left: 1px solid #30363d; text-align: center; line-height: 32px; }

/* canvas */
.canvas { flex: 1; min-height: 0; position: relative; background-color: #2e2f2f; background-image: radial-gradient(circle at center, #7a7a7a .7px, transparent 1px); background-size: 16.500px 16.500px; background-position: 4px 4px; }
.seg { position: absolute; left: 684px; top: -21px; width: 302px; height: 43px; background: #555657; border-radius: 4px; display: flex; align-items: center; padding-left: 4px; font-size: 15px; font-weight: 500; color: #c8cbd0; z-index: 3; }
.seg-item { padding: 0 15px; line-height: 31px; white-space: nowrap; }
.seg-on { background: #2e2f2f; color: #f4f4f4; border-radius: 4px; font-weight: 600; }
.edges { position: absolute; left: 0; top: 0; width: 1670px; height: 542px; z-index: 2; pointer-events: none; overflow: hidden; }
.edges path { fill: none; }
.e-green path { stroke: #23a05f; stroke-width: 2; }
.e-green .e-dash { stroke-dasharray: 7 6; }
.e-gray path { stroke: #b6b9c0; stroke-width: 2; }
.arrows-g path { fill: #23a05f; }
.arrows-w path { fill: #b6b9c0; }
.ports-in rect, .ports-out circle { fill: #c8cad2; }
.diamonds path { fill: #84848f; }
.elabels text { font: 500 10px Inter, sans-serif; fill: #c5c7cd; text-anchor: middle; paint-order: stroke; stroke: #2e2f2f; stroke-width: 4px; }
.plabels text { font: 500 9px Inter, sans-serif; fill: #8c8c9b; text-anchor: middle; }
.plabels .req { fill: #f05a4a; }
.edges .bolt { fill: #ee5f4a; }

.node { position: absolute; width: 69px; height: 69px; border: 1.800px solid #25a262; border-radius: 6px; background: #414244; display: flex; align-items: center; justify-content: center; }
.node.idle { border-color: #b6b9c0; border-radius: 8px; }
.node.trigger { border-radius: 32px 6px 6px 32px; }
.node-label { position: absolute; left: 50%; top: 100%; transform: translateX(-50%); margin-top: 6px; width: 180px; text-align: center; pointer-events: none; }
.nt { font-size: 11.500px; line-height: 15px; font-weight: 500; color: #f2f2f2; }
.ns { font-size: 9.500px; line-height: 15px; margin-top: 1px; color: #9a9da3; }
.check { position: absolute; right: 4px; bottom: 4px; width: 12px; height: 10px; }
.check-mid { right: auto; left: 50%; margin-left: -5px; bottom: 5px; }
.ico-form { width: 26px; height: 26px; }
.ico-merge { width: 29px; height: 29px; }
.ico-switch { width: 26px; height: 30px; }
.ico-air { width: 28px; height: 24px; }
.ico-slack { width: 29px; height: 29px; }
.ico-gmail { width: 29px; height: 23px; }
.n-form { left: 157px; top: 179px; height: 69px; }
.n-merge { left: 574px; top: 179px; }
.n-agent { left: 320px; top: 272px; width: 161px; height: 69px; justify-content: flex-start; padding-left: 12px; }
.ico-robot { width: 30px; height: 30px; flex: none; }
.agent-name { margin-left: 11px; font-size: 11.500px; font-weight: 600; color: #f2f2f2; }
.n-gemini { left: 377px; top: 434px; width: 58px; height: 58px; border-radius: 50%; background: #232736; }
.ico-g { width: 20px; height: 20px; }
.n-switch { left: 735px; top: 167px; height: 93px; }
.n-c1 { left: 897px; top: 40px; }
.n-c2 { left: 1059px; top: 40px; }
.n-c3 { left: 1221px; top: 40px; }
.n-m1 { left: 897px; top: 179px; }
.n-f1 { left: 897px; top: 318px; }
.n-f2 { left: 1059px; top: 318px; }
.n-f3 { left: 1221px; top: 318px; }
.ctl { width: 52px; height: 53px; border: 1px solid #dedede; border-radius: 4px; display: flex; align-items: center; justify-content: center; background: transparent; flex: none; }
.ctl svg { width: 19px; height: 19px; }
.ctl-spark svg { width: 24px; height: 24px; }
.ctl-broom svg { width: 22px; height: 22px; }
.side-tools { position: absolute; right: 20px; top: 20px; display: flex; flex-direction: column; gap: 10.500px; z-index: 3; }
.side-tools .ctl { height: 52px; }
.bottom-tools { position: absolute; left: 20px; bottom: 20px; display: flex; gap: 15.500px; z-index: 3; }
.execute { position: absolute; left: 721px; bottom: 20px; width: 229px; height: 52px; background: #f56c5c; border-radius: 4px; color: #fff; font-size: 17px; font-weight: 600; display: flex; align-items: center; justify-content: center; gap: 10px; z-index: 3; }
.execute svg { width: 16px; height: 18px; }

/* logs */
.logs { height: 215px; flex: none; background: #2e2f2f; border-top: 1px solid #55565a; display: flex; overflow: hidden; position: relative; z-index: 3; }
.logs-left { width: 359px; flex: none; border-right: 1px solid #55565a; display: flex; flex-direction: column; }
.logs-right { flex: 1; min-width: 0; display: flex; flex-direction: column; }
.logs-head { height: 41px; flex: none; border-bottom: 1px solid #55565a; display: flex; align-items: center; padding: 0 20px 1px; }
.logs-title { color: #f2f2f2; font-size: 15px; font-weight: 600; }
.clear { margin-left: auto; display: flex; align-items: center; gap: 5px; font-size: 15px; font-weight: 500; color: #aeb2b8; white-space: nowrap; padding-right: 0; }
.clear svg { width: 14px; height: 16px; }
.logs-sum { height: 39px; flex: none; display: flex; align-items: center; padding-left: 20px; font-size: 15px; color: #a0a3a8; }
.vsep { width: 1px; height: 20px; background: #55565a; margin: 0 10px; }
.logs-body { flex: 1; display: flex; min-height: 0; padding-right: 2px; }
.tree { flex: 1; padding: 0 10px; font-size: 15px; font-weight: 500; color: #f2f2f2; overflow: hidden; }
.tree-row { display: flex; align-items: center; white-space: nowrap; }
.tree-first { height: 41px; padding-left: 10px; gap: 10px; }
.tree-ico { width: 20px; height: 20px; flex: none; }
.tree-on { height: 40px; padding-left: 10px; gap: 10px; background: #555657; border-radius: 4px; width: 318px; }
.tree-chev { width: 14px; height: 14px; margin-left: auto; margin-right: 11px; }
.tree-sub { height: 40px; position: relative; padding-left: 50px; gap: 12px; }
.branch { position: absolute; left: 20px; top: 0; width: 20px; height: 20px; border-left: 1.500px solid #6a6b6e; border-bottom: 1.500px solid #6a6b6e; border-bottom-left-radius: 6px; }
.tree-g { width: 18px; height: 18px; flex: none; }
.scroll { width: 19px; flex: none; background: #fff; display: flex; flex-direction: column; align-items: center; padding-top: 6px; }
.s-up { width: 0; height: 0; border-left: 6px solid transparent; border-right: 6px solid transparent; border-bottom: 9px solid #8a8a8a; }
.s-down { width: 0; height: 0; border-left: 6px solid transparent; border-right: 6px solid transparent; border-top: 9px solid #8a8a8a; margin-top: auto; margin-bottom: 5px; }
.s-thumb { width: 11px; background: #8a8a8a; border-radius: 6px; margin-top: 8px; }
.scroll-a .s-thumb { height: 34px; }
.scroll-b .s-thumb { height: 45px; }
.scroll-c .s-thumb { height: 75px; }
.detail-head { padding-left: 13px; padding-right: 0; }
.dh-ico { width: 18px; height: 18px; margin-left: 0; flex: none; }
.dh-name { margin-left: 10px; font-size: 15px; font-weight: 600; color: #f2f2f2; }
.dh-stat { font-size: 15px; color: #a0a3a8; white-space: nowrap; }
.dh-name + .dh-stat { margin-left: 10px; }
.io-btn { height: 28px; border: 1px solid #e2dedd; border-radius: 4px; background: #74413c; color: #f2f2f2; font-size: 15px; font-weight: 500; padding: 0 10px; display: flex; align-items: center; margin-left: 10px; }
.io-first { margin-left: auto; }
.io-dots { margin-left: 18px; }
.io-chev { width: 14px; height: 14px; margin: 0 19px 0 19px; color: #b0b3b8; }
.io { flex: 1; min-height: 0; display: flex; }
.io-in { width: 655px; flex: none; border-right: 1px solid #55565a; display: flex; flex-direction: column; }
.io-out { flex: 1; min-width: 0; display: flex; flex-direction: column; }
.io-bar { height: 42px; flex: none; display: flex; align-items: center; justify-content: space-between; padding: 0 10px 0 11px; }
.io-label { font-size: 14px; font-weight: 500; letter-spacing: 5px; color: #a0a3a8; }
.io-count { font-size: 14px; color: #a0a3a8; }
.io-body { flex: 1; min-height: 0; display: flex; }
.fields { flex: 1; padding-left: 41px; overflow: hidden; display: flex; flex-direction: column; gap: 10px; }
.field { height: 30px; flex: none; display: flex; align-items: center; gap: 10px; }
.pill { height: 30px; display: flex; align-items: center; background: #414244; border-radius: 4px; padding-right: 8px; font-size: 15px; font-weight: 500; color: #dcdfe3; white-space: nowrap; }
.pill-t { width: 40px; text-align: center; font-size: 9.500px; font-weight: 600; color: #95989e; }
.pill-h { font-size: 18px; font-weight: 400; }
.val { font-size: 14.700px; font-weight: 500; color: #e8e8e8; margin-top: 5px; white-space: nowrap; }
.out-table { flex: none; width: 616px; height: 67px; margin-left: 11px; border-collapse: collapse; font-size: 15px; }
.out-table th, .out-table td { border: 1px solid #55565a; text-align: left; padding: 0 8px; }
.out-table th { color: #f4f4f4; font-weight: 700; }
.out-table td { color: #cdd0d4; }
.scroll-c { margin-left: auto; }
.collapse { position: absolute; left: -13px; top: 419px; width: 25px; height: 25px; border-radius: 50%; background: #2e2f2f; border: 1px solid #595a5d; display: flex; align-items: center; justify-content: center; z-index: 4; }
.collapse svg { width: 10px; height: 10px; }

/* taskbar */
.taskbar { height: 60px; flex: none; position: relative; overflow: hidden; background: linear-gradient(to right, #070707 0%, #0a0a0a 30%, #141414 65%, #1c1c1c 100%); font-family: "Noto Sans", sans-serif; color: #f2f2f2; }
.noise { position: absolute; inset: 0; }
.tb-apps { position: absolute; left: 547px; top: 0; height: 60px; display: flex; }
.app-i { width: 55.100px; height: 60px; display: flex; align-items: center; justify-content: center; position: relative; flex: none; }
.app-i svg { width: 30px; height: 30px; }
.running::after { content: ""; position: absolute; left: 50%; margin-left: -4px; bottom: 2px; width: 8px; height: 3px; border-radius: 2px; background: #8c8c8c; }
.running-blue::after { content: ""; position: absolute; left: 50%; margin-left: -10px; bottom: 2px; width: 20px; height: 4px; border-radius: 2px; background: #4cc2ff; }
.app-brave { background: rgba(255,255,255,.06); border-radius: 5px; height: 50px; width: 44px; margin: 5px 0 0 5px; }
.tray { position: absolute; right: 24px; top: 0; height: 60px; display: flex; align-items: center; }
.tray-up { width: 14px; height: 10px; margin-right: 20px; }
.lang { display: flex; flex-direction: column; align-items: center; font-size: 15px; line-height: 20px; width: 42px; margin-right: 15px; }
.tray-i { width: 22px; height: 18px; margin-right: 8px; }
.clock { display: flex; flex-direction: column; align-items: flex-end; font-size: 15px; line-height: 20px; margin-left: 10px; }
```
